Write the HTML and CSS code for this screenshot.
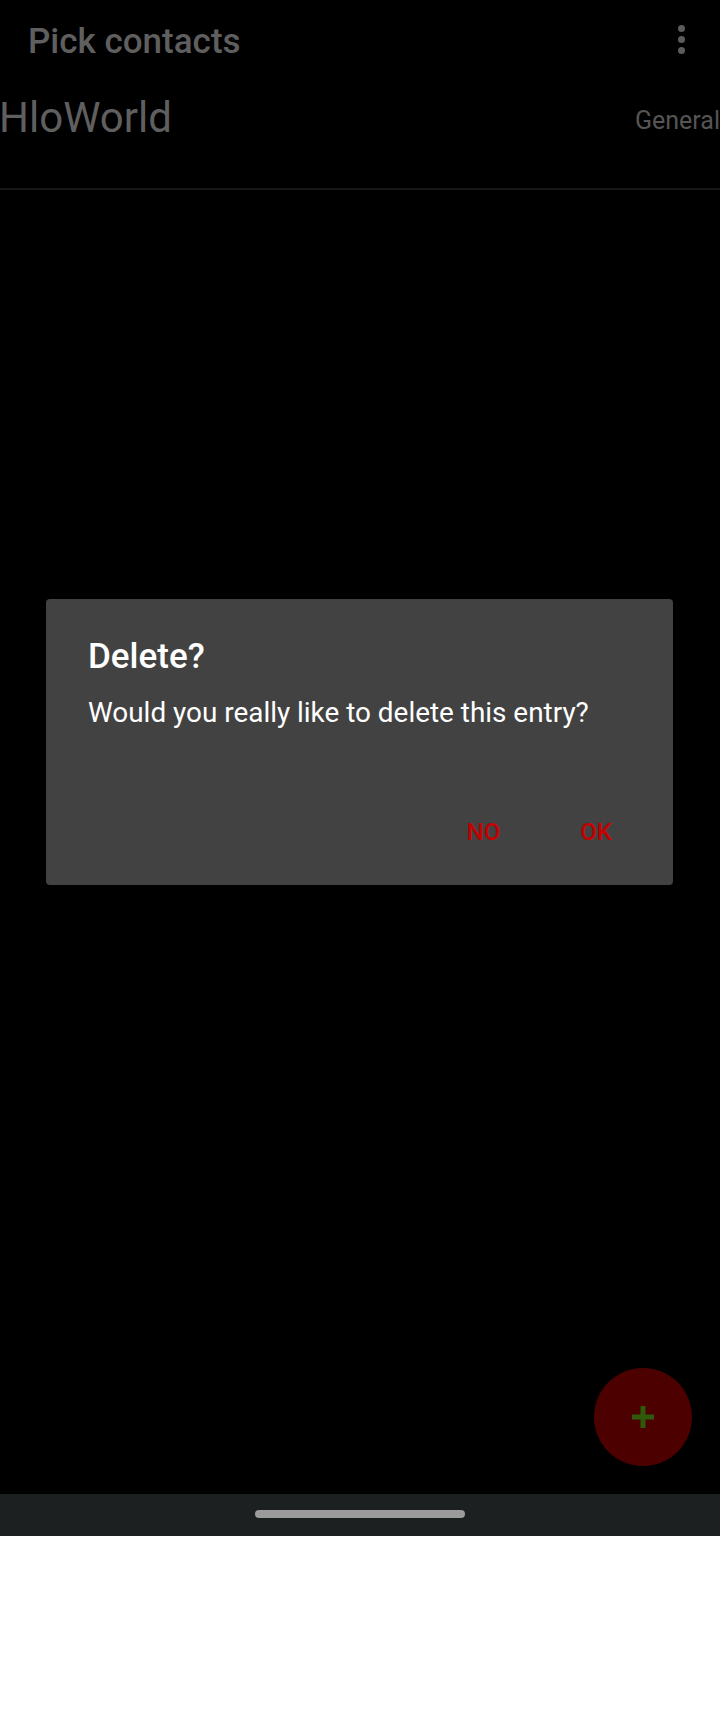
FILE: index.html
```html
<!DOCTYPE html>
<html>
<head>
<meta charset="utf-8">
<link rel="stylesheet" href="styles.css">
</head>
<body>
<div class="screen">
  <div class="app">
    <header class="toolbar">
      <span class="title">Pick contacts</span>
      <span class="menu"><i></i><i></i><i></i></span>
    </header>
    <div class="row">
      <span class="name">HloWorld</span>
      <span class="group">General</span>
    </div>
    <div class="divider"></div>
    <div class="fab">
      <svg width="24" height="24" viewBox="0 0 24 24"><path d="M12 1v22M1 12h22" stroke="#2e5a0a" stroke-width="5"/></svg>
    </div>
    <div class="dialog">
      <div class="d-title">Delete?</div>
      <div class="d-body">Would you really like to delete this entry?</div>
      <div class="d-actions">
        <span class="btn">NO</span>
        <span class="btn">OK</span>
      </div>
    </div>
  </div>
  <div class="navbar"><div class="handle"></div></div>
  <div class="below"></div>
</div>
</body>
</html>
```
FILE: styles.css
```css
html, body {
  margin: 0;
  padding: 0;
  background: #ffffff;
}
.screen {
  width: 720px;
  height: 1712px;
  display: flex;
  flex-direction: column;
  font-family: Roboto, "Noto Sans", sans-serif;
  overflow: hidden;
}
.app {
  position: relative;
  height: 1494px;
  background: #000000;
  flex: none;
}
.toolbar {
  height: 78px;
  display: flex;
  align-items: flex-start;
  justify-content: space-between;
  padding: 0 0 0 28px;
  box-sizing: border-box;
}
.title {
  margin-top: 22px;
  font-size: 35px;
  line-height: 40px;
  font-weight: 500;
  color: #5f5f5f;
}
.menu {
  display: flex;
  flex-direction: column;
  gap: 4px;
  margin-top: 25px;
  margin-right: 35px;
}
.menu i {
  display: block;
  width: 7px;
  height: 7px;
  border-radius: 50%;
  background: #5c5c5c;
}
.row {
  height: 110px;
  display: flex;
  justify-content: space-between;
  align-items: flex-start;
}
.name {
  margin-top: 16px;
  margin-left: -1px;
  font-size: 42px;
  line-height: 48px;
  color: #5f5f5f;
}
.group {
  margin-top: 28px;
  font-size: 25px;
  line-height: 30px;
  color: #555555;
}
.divider {
  height: 2px;
  background: #151515;
}
.fab {
  position: absolute;
  left: 594px;
  top: 1368px;
  width: 98px;
  height: 98px;
  border-radius: 50%;
  background: #4d0000;
  display: flex;
  align-items: center;
  justify-content: center;
}
.dialog {
  position: absolute;
  left: 46px;
  top: 599px;
  width: 627px;
  height: 286px;
  box-sizing: border-box;
  background: #424242;
  border-radius: 4px;
  padding: 38px 61px 0 42px;
  display: flex;
  flex-direction: column;
}
.d-title {
  font-size: 35px;
  line-height: 40px;
  font-weight: 500;
  color: #ffffff;
}
.d-body {
  margin-top: 19px;
  font-size: 27.9px;
  line-height: 33px;
  color: #ffffff;
  white-space: nowrap;
}
.d-actions {
  margin-top: 89px;
  display: flex;
  justify-content: flex-end;
  gap: 80px;
}
.btn {
  font-size: 24px;
  line-height: 28px;
  font-weight: 500;
  color: #c50000;
}
.navbar {
  height: 42px;
  flex: none;
  background: #1d2021;
  display: flex;
  justify-content: center;
  padding-top: 16px;
  box-sizing: border-box;
}
.handle {
  width: 210px;
  height: 8px;
  border-radius: 4px;
  background: #9a9b9a;
}
.below {
  flex: 1;
  background: #ffffff;
}
```
